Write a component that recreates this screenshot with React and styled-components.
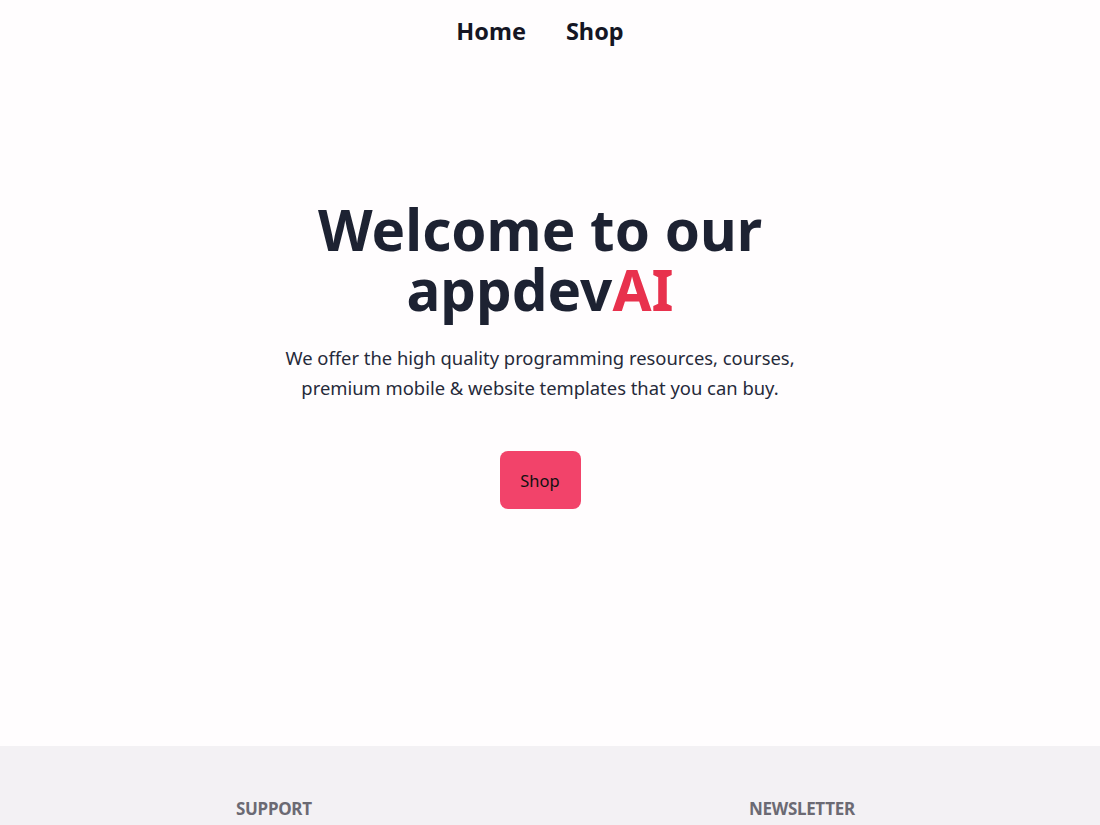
import React from "react";
import styled, { createGlobalStyle } from "styled-components";

const GlobalStyle = createGlobalStyle`
  html, body {
    margin: 0;
    padding: 0;
    background: #fffdfe;
    font-family: "Noto Sans", "Open Sans", sans-serif;
  }
  * { box-sizing: border-box; }
`;

const Nav = styled.nav`
  height: 62px;
  padding-right: 20px;
  display: flex;
  justify-content: center;
  align-items: center;
  gap: 40px;
`;

const NavLink = styled.a`
  font-size: 23.5px;
  font-weight: 700;
  color: #141624;
  text-decoration: none;
  cursor: pointer;
`;

const Hero = styled.section`
  height: 684px;
  padding: 138px 20px 0 0;
  display: flex;
  flex-direction: column;
  align-items: center;
  text-align: center;
`;

const Title = styled.h1`
  margin: 0;
  font-size: 56.5px;
  line-height: 60px;
  font-weight: 700;
  color: #1d2232;
`;

const Accent = styled.span`
  color: #e8314d;
`;

const Lead = styled.p`
  margin: 23px 0 0;
  font-size: 18.4px;
  line-height: 30px;
  color: #262a3a;
`;

const Button = styled.button`
  margin-top: 48px;
  width: 81px;
  height: 58px;
  border: none;
  border-radius: 8px;
  background: #f2436a;
  color: #111;
  font-family: inherit;
  font-size: 16.5px;
  cursor: pointer;
`;

const Footer = styled.footer`
  background: #f3f1f4;
  height: 200px;
  padding: 51px 0 0 236px;
  display: grid;
  grid-template-columns: 513px 300px;
  align-items: start;
`;

const FooterHeading = styled.h3`
  margin: 0;
  font-size: 17px;
  line-height: 24px;
  font-weight: 700;
  color: #6b6a73;
  text-transform: uppercase;
  letter-spacing: -0.3px;
`;

export default function App() {
  return (
    <>
      <GlobalStyle />
      <Nav>
        <NavLink>Home</NavLink>
        <NavLink>Shop</NavLink>
      </Nav>
      <Hero>
        <Title>
          Welcome to our
          <br />
          appdev<Accent>AI</Accent>
        </Title>
        <Lead>
          We offer the high quality programming resources, courses,
          <br />
          premium mobile &amp; website templates that you can buy.
        </Lead>
        <Button>Shop</Button>
      </Hero>
      <Footer>
        <FooterHeading>Support</FooterHeading>
        <FooterHeading>Newsletter</FooterHeading>
      </Footer>
    </>
  );
}
